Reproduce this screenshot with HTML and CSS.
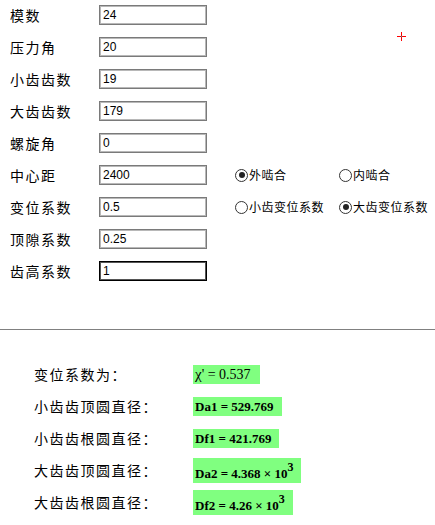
FILE: index.html
```html
<!DOCTYPE html>
<html lang="zh">
<head>
<meta charset="utf-8">
<link rel="stylesheet" href="styles.css">
</head>
<body>
<div class="page">
  <div class="form">
    <div class="row"><span class="lbl">模数</span><input class="inp" value="24"></div>
    <div class="row"><span class="lbl">压力角</span><input class="inp" value="20"></div>
    <div class="row"><span class="lbl">小齿齿数</span><input class="inp" value="19"></div>
    <div class="row"><span class="lbl">大齿齿数</span><input class="inp" value="179"></div>
    <div class="row"><span class="lbl">螺旋角</span><input class="inp" value="0"></div>
    <div class="row"><span class="lbl">中心距</span><input class="inp" value="2400">
      <div class="radios">
        <label class="opt"><input type="radio" name="mesh" class="rad" checked>外啮合</label>
        <label class="opt"><input type="radio" name="mesh" class="rad">内啮合</label>
      </div>
    </div>
    <div class="row"><span class="lbl">变位系数</span><input class="inp" value="0.5">
      <div class="radios">
        <label class="opt"><input type="radio" name="shift" class="rad">小齿变位系数</label>
        <label class="opt"><input type="radio" name="shift" class="rad" checked>大齿变位系数</label>
      </div>
    </div>
    <div class="row"><span class="lbl">顶隙系数</span><input class="inp" value="0.25"></div>
    <div class="row"><span class="lbl">齿高系数</span><input class="inp focus" value="1"></div>
  </div>

  <svg class="cross" width="9" height="9" viewBox="0 0 9 9">
    <rect x="0" y="4" width="9" height="1" fill="#ff0000"/>
    <rect x="4" y="0" width="1" height="9" fill="#ff0000"/>
    <rect x="4" y="4" width="1" height="1" fill="#00c0c0"/>
  </svg>

  <hr class="sep">

  <div class="results">
    <div class="rrow"><span class="rlbl">变位系数为：</span><span class="val reg"><span class="chi">χ</span>' = 0.537</span></div>
    <div class="rrow"><span class="rlbl">小齿齿顶圆直径：</span><span class="val">Da1 = 529.769</span></div>
    <div class="rrow"><span class="rlbl">小齿齿根圆直径：</span><span class="val">Df1 = 421.769</span></div>
    <div class="rrow"><span class="rlbl">大齿齿顶圆直径：</span><span class="val tall">Da2 = 4.368 × 10<sup>3</sup></span></div>
    <div class="rrow"><span class="rlbl">大齿齿根圆直径：</span><span class="val tall">Df2 = 4.26 × 10<sup>3</sup></span></div>
  </div>
</div>
</body>
</html>
```

FILE: styles.css
```css
html, body {
  margin: 0;
  padding: 0;
  background: #ffffff;
}
body {
  font-family: "Noto Sans CJK SC", "Liberation Sans", sans-serif;
  color: #000;
}
.page {
  position: relative;
  width: 435px;
  height: 525px;
  overflow: hidden;
}
.form {
  display: flex;
  flex-direction: column;
  gap: 12px;
  padding: 5px 0 0 10px;
}
.row {
  display: flex;
  align-items: center;
  height: 20px;
}
.lbl {
  flex: none;
  width: 89px;
  font-size: 14px;
  letter-spacing: 1.5px;
  line-height: 20px;
}
.inp {
  flex: none;
  box-sizing: border-box;
  width: 108px;
  height: 20px;
  margin: 0;
  padding: 0 3px;
  border: 1px solid #7a7a7a;
  box-shadow: inset 0 0 0 1px #b8b8b8;
  font-family: "Liberation Sans", Arial, sans-serif;
  font-size: 12px;
  color: #000;
  background: #fff;
  outline: none;
}
.inp.focus {
  border-color: #000;
  box-shadow: inset 0 0 0 1px #555;
}
.radios {
  flex: none;
  display: flex;
  margin-left: 28px;
}
.opt {
  flex: none;
  display: flex;
  align-items: center;
  width: 104px;
  font-size: 12px;
  letter-spacing: 0.5px;
  line-height: 20px;
  white-space: nowrap;
}
.rad {
  appearance: none;
  -webkit-appearance: none;
  box-sizing: border-box;
  flex: none;
  width: 13px;
  height: 13px;
  margin: 0 1px 0 0;
  border: 1px solid #333;
  border-radius: 50%;
  background: #fff;
  position: relative;
}
.rad:checked::after {
  content: "";
  position: absolute;
  left: 2.5px;
  top: 2.5px;
  width: 6px;
  height: 6px;
  border-radius: 50%;
  background: #222;
}
.cross {
  position: absolute;
  left: 397px;
  top: 32px;
}
.sep {
  margin: 48px 0 0 0;
  border: none;
  border-top: 1px solid #808080;
  height: 0;
}
.results {
  display: flex;
  flex-direction: column;
  padding: 28px 0 0 34px;
}
.rrow {
  display: flex;
  align-items: center;
  height: 32px;
}
.rlbl {
  flex: none;
  width: 159px;
  font-size: 14px;
  letter-spacing: 1.5px;
}
.val {
  background: #80ff80;
  font-family: "Liberation Serif", "Times New Roman", serif;
  font-size: 13px;
  font-weight: bold;
  line-height: 19px;
  padding: 0 8px 0 2px;
  white-space: nowrap;
}
.val.reg {
  font-weight: normal;
  font-size: 14px;
  padding-right: 9px;
}
.chi {
  font-size: 15px;
}
.val.tall {
  padding-top: 6px;
}
.val sup {
  font-size: 12px;
  line-height: 0;
  vertical-align: 7px;
}
```
